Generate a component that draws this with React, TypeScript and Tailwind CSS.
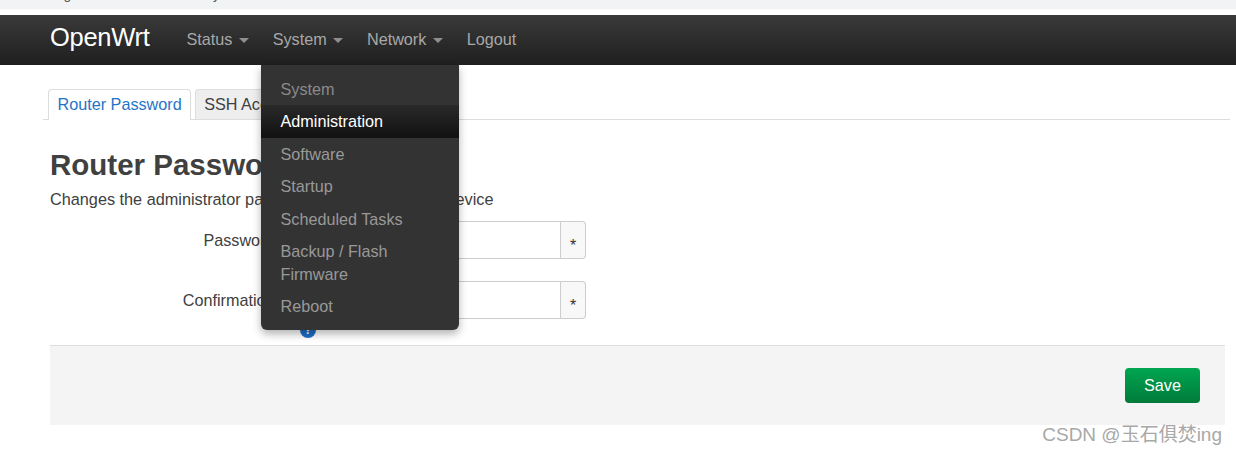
const font = { fontFamily: '"Liberation Sans", Arial, sans-serif' };

function NavItem({ label, caret = true }: { label: string; caret?: boolean }) {
  return (
    <a className="flex h-full items-center px-[12px] pb-[2px] text-[16.2px] text-[#a8a8a8]">
      {label}
      {caret && (
        <span className="mt-[2px] ml-[6.3px] h-0 w-0 border-x-[5px] border-t-[5px] border-x-transparent border-t-[#8f8f8f]" />
      )}
    </a>
  );
}

function DropdownMenu() {
  const items = ["Software", "Startup", "Scheduled Tasks"];
  return (
    <div className="absolute top-[65px] left-[261px] z-10 w-[198px] rounded-b-[6px] bg-[#333333] pt-[8px] pb-[8px] text-[16.2px] leading-[23px] text-[#999999] shadow-[0_4px_8px_rgba(0,0,0,0.3)]">
      <div className="px-[19.5px] pt-[5px] pb-[4px] text-[#8a8a8a]">System</div>
      <div className="bg-gradient-to-b from-[#2a2a2a] to-[#111111] px-[19.5px] pt-[5px] pb-[4.5px] text-white">
        Administration
      </div>
      {items.map((item) => (
        <div key={item} className="px-[19.5px] pt-[5px] pb-[4.5px]">
          {item}
        </div>
      ))}
      <div className="px-[19.5px] pt-[4.5px] pb-[4.5px]">
        Backup / Flash
        <br />
        Firmware
      </div>
      <div className="px-[19.5px] pt-[4.5px] pb-[4px]">Reboot</div>
    </div>
  );
}

function PasswordRow({ label, help }: { label: string; help?: boolean }) {
  return (
    <div className="relative flex h-[38px] items-center">
      <label className="w-[224.5px] text-right text-[16.2px] text-[#404040]">
        {label}
      </label>
      <div className="ml-[35.5px] flex h-[38px] w-[276px]">
        <input
          type="password"
          className="h-full flex-1 rounded-l-[4px] border border-[#cccccc] bg-white"
        />
        <span className="flex h-full w-[25px] items-center justify-center rounded-r-[4px] border border-l-0 border-[#cccccc] bg-[#f8f8f8] pt-[12px] text-[16px] text-[#333]">
          *
        </span>
      </div>
      {help && (
        <span className="absolute top-[41px] left-[250px] flex h-[16px] w-[16px] items-center justify-center rounded-full bg-[#1f6fc5] text-[12px] font-bold text-white">
          ?
        </span>
      )}
    </div>
  );
}

export default function App() {
  return (
    <div
      className="relative h-[454px] w-[1236px] overflow-hidden bg-white"
      style={font}
    >
      <div className="h-[9px] overflow-hidden bg-[#f2f3f5] pl-[30px] text-[14px] leading-[8px] text-[#555]">
        <div className="-mt-[10px]">Changes the administrator key</div>
      </div>

      <nav className="mt-[6px] flex h-[50px] items-center bg-gradient-to-b from-[#3a3a3a] to-[#1f1f1f] pl-[50px]">
        <span className="mr-[25px] -mt-[6px] text-[25.5px] tracking-[-0.3px] text-white">OpenWrt</span>
        <NavItem label="Status" />
        <NavItem label="System" />
        <NavItem label="Network" />
        <NavItem label="Logout" caret={false} />
      </nav>

      <DropdownMenu />

      <main className="pr-[11px] pl-[50px]">
        <div className="mt-[24px] -mr-[5px] -ml-[7px] flex h-[31px] gap-[4px] border-b border-[#dddddd] pl-[5px] text-[16.2px]">
          <div className="-mb-px flex h-[31px] items-center rounded-t-[4px] border border-b-0 border-[#dddddd] bg-white px-[8.5px] pb-[2px] text-[#1f74c8]">
            Router Password
          </div>
          <div className="flex h-[30px] items-center rounded-t-[4px] border border-b-0 border-[#dddddd] bg-[#eeeeee] px-[8px] text-[#404040]">
            SSH Access
          </div>
        </div>

        <h1 className="mt-[27px] text-[29.5px] leading-[36px] font-bold text-[#404040]">
          Router Password
        </h1>
        <p className="mt-[5px] text-[16.25px] leading-[22px] text-[#404040]">
          Changes the administrator password for accessing the device
        </p>

        <div className="mt-[11px] flex flex-col gap-[22px]">
          <PasswordRow label="Password" />
          <PasswordRow label="Confirmation" help />
        </div>

        <div className="mt-[26px] flex h-[80px] items-center justify-end border-t border-[#dddddd] bg-[#f4f4f4] pr-[25px]">
          <button className="h-[35px] w-[75px] rounded-[4px] bg-gradient-to-b from-[#00a651] to-[#007a3a] text-[16.2px] text-white">
            Save
          </button>
        </div>
      </main>

      <div
        className="absolute top-[422px] right-[14px] text-[19px] leading-[26px] text-[#a8a8a8]"
        style={{ fontFamily: '"Liberation Sans", "Noto Sans CJK SC", sans-serif' }}
      >
        CSDN @玉石俱焚ing
      </div>
    </div>
  );
}
